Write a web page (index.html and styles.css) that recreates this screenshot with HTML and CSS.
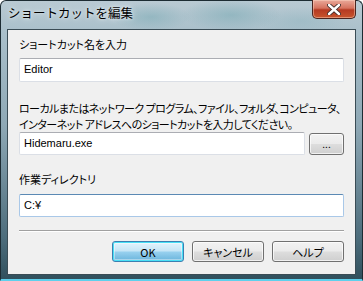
FILE: index.html
```html
<!DOCTYPE html>
<html lang="ja">
<head>
    <meta charset="UTF-8">
    <title>ショートカットを編集</title>
    <link rel="stylesheet" href="styles.css">
</head>
<body>
    <div class="window">
        <div class="titlebar">
            <span class="title">ショートカットを編集</span>
            <button class="close-btn">
                <svg width="14" height="11" viewBox="0 0 14 11">
                    <path d="M2 1 L12 10 M12 1 L2 10" stroke="#3b2a28" stroke-width="4.2" stroke-linecap="round"/>
                    <path d="M2 1 L12 10 M12 1 L2 10" stroke="#fff" stroke-width="2.4" stroke-linecap="round"/>
                </svg>
            </button>
        </div>
        <div class="client">
            <label class="label">ショートカット名を入力</label>
            <div class="textbox textbox-name">Editor</div>
            <p class="desc">ローカルまたはネットワーク プログラム、ファイル、フォルダ、コンピュータ、<br>インターネット アドレスへのショートカットを入力してください。</p>
            <div class="row">
                <div class="textbox">Hidemaru.exe</div>
                <button class="btn btn-browse">...</button>
            </div>
            <label class="label label-dir">作業ディレクトリ</label>
            <div class="textbox textbox-dir">C:&yen;</div>
            <hr class="separator">
            <div class="actions">
                <button class="btn btn-default">OK</button>
                <button class="btn">キャンセル</button>
                <button class="btn">ヘルプ</button>
            </div>
        </div>
    </div>
</body>
</html>
```

FILE: styles.css
```css
html, body {
    margin: 0;
    padding: 0;
}
body {
    width: 363px;
    height: 281px;
    overflow: hidden;
    font-family: "Noto Sans CJK JP", "Noto Sans", sans-serif;
    font-size: 11px;
    font-feature-settings: "palt";
    color: #000;
}
.window {
    width: 363px;
    height: 281px;
    box-sizing: border-box;
    border: 1px solid #1d2c33;
    border-bottom: 2px solid #5fd0ec;
    border-radius: 6px 6px 0 0;
    background:
        radial-gradient(ellipse 40px 14px at 150px 16px, rgba(120, 170, 180, 0.5), transparent),
        radial-gradient(ellipse 50px 16px at 230px 14px, rgba(110, 165, 175, 0.45), transparent),
        radial-gradient(ellipse 45px 14px at 300px 20px, rgba(140, 180, 190, 0.4), transparent),
        linear-gradient(180deg, #b9cad3 0%, #a9bfca 12%, #8ea8b5 45%, #4d6d7c 85%, #30505d 100%);
    display: flex;
    flex-direction: column;
}
.titlebar {
    height: 28px;
    display: flex;
    align-items: flex-start;
    justify-content: space-between;
    padding-left: 7px;
}
.title {
    font-size: 12.5px;
    font-feature-settings: normal;
    line-height: 14px;
    margin-top: 5px;
    color: #000;
    text-shadow: 0 0 6px #e6eef2, 0 0 3px #e6eef2;
}
.close-btn {
    width: 44px;
    height: 19px;
    margin: -1px 6px 0 0;
    padding: 0;
    border: 1px solid #4a2520;
    border-top: none;
    border-radius: 0 0 5px 5px;
    background: linear-gradient(180deg, #e9a99a 0%, #d6735f 45%, #b53a22 55%, #c8552e 100%);
    box-shadow: inset 0 0 0 1px rgba(255, 220, 200, 0.45);
    display: flex;
    align-items: center;
    justify-content: center;
}
.client {
    margin: 0 6px 4px 6px;
    flex: 1;
    background: #f0f0f0;
    border: 1px solid #3a4c55;
    padding: 6px 11px 0 11px;
}
.label {
    display: block;
    line-height: 16px;
    height: 16px;
}
.textbox {
    box-sizing: border-box;
    height: 23px;
    background: #fff;
    border: 1px solid #dbdfe6;
    border-top-color: #abadb3;
    border-radius: 2px;
    padding: 0 4px;
    line-height: 20px;
    font-family: "Liberation Sans", Arial, sans-serif;
    font-size: 11px;
}
.textbox-name {
    margin-top: 6px;
    height: 24px;
    line-height: 21px;
}
.desc {
    margin: 18px 0 0 0;
    line-height: 16px;
    white-space: nowrap;
    letter-spacing: -0.55px;
}
.row {
    display: flex;
    align-items: center;
    gap: 4px;
    margin-top: 0;
}
.row .textbox {
    flex: 1;
}
.label-dir {
    margin-top: 16px;
}
.textbox-dir {
    margin-top: 7px;
    border-color: #a9c8e8;
    border-top-color: #5b89b4;
}
.separator {
    margin: 13px 0 0 0;
    border: none;
    border-top: 1px solid #a0a0a0;
    border-bottom: 1px solid #fff;
}
.actions {
    display: flex;
    justify-content: flex-end;
    gap: 8px;
    margin-top: 9px;
}
.btn {
    width: 72px;
    height: 21px;
    padding: 0;
    font-family: inherit;
    font-size: 11px;
    font-feature-settings: "palt";
    color: #000;
    border: 1px solid #707070;
    border-radius: 3px;
    background: linear-gradient(180deg, #f2f2f2 0%, #ebebeb 48%, #dddddd 52%, #cfcfcf 100%);
    box-shadow: inset 0 0 0 1px rgba(255, 255, 255, 0.7);
}
.btn-browse {
    width: 35px;
    height: 22px;
    font-size: 10px;
    line-height: 10px;
}
.btn-default {
    border-color: #3c7fb1;
    background: linear-gradient(180deg, #e5f4fc 0%, #c4e5f6 48%, #98d1ef 52%, #68b3db 100%);
    box-shadow: inset 0 0 0 1px #48e0f6, inset 0 0 0 2px rgba(255, 255, 255, 0.4);
}
```
